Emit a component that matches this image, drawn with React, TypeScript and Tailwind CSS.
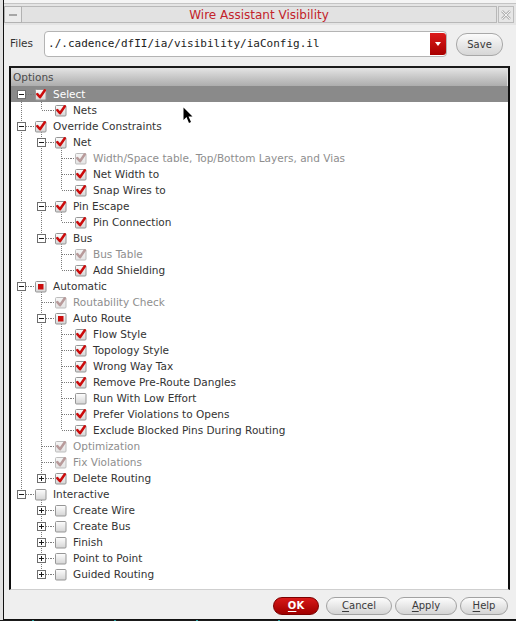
import React from "react";

type State = "checked" | "unchecked" | "partial";
type TNode = {
  label: string;
  state: State;
  disabled?: boolean;
  expanded?: boolean;
  collapsed?: boolean;
  selected?: boolean;
  children?: TNode[];
};

const c = (label: string, extra: Partial<TNode> = {}): TNode => ({ label, state: "checked", ...extra });
const d = (label: string): TNode => ({ label, state: "checked", disabled: true });
const u = (label: string, extra: Partial<TNode> = {}): TNode => ({ label, state: "unchecked", ...extra });

const tree: TNode[] = [
  c("Select", { expanded: true, selected: true, children: [c("Nets")] }),
  c("Override Constraints", {
    expanded: true,
    children: [
      c("Net", {
        expanded: true,
        children: [d("Width/Space table, Top/Bottom Layers, and Vias"), c("Net Width to"), c("Snap Wires to")],
      }),
      c("Pin Escape", { expanded: true, children: [c("Pin Connection")] }),
      c("Bus", { expanded: true, children: [d("Bus Table"), c("Add Shielding")] }),
    ],
  }),
  {
    label: "Automatic",
    state: "partial",
    expanded: true,
    children: [
      d("Routability Check"),
      {
        label: "Auto Route",
        state: "partial",
        expanded: true,
        children: [
          c("Flow Style"),
          c("Topology Style"),
          c("Wrong Way Tax"),
          c("Remove Pre-Route Dangles"),
          u("Run With Low Effort"),
          c("Prefer Violations to Opens"),
          c("Exclude Blocked Pins During Routing"),
        ],
      },
      d("Optimization"),
      d("Fix Violations"),
      c("Delete Routing", { collapsed: true }),
    ],
  },
  u("Interactive", {
    expanded: true,
    children: [
      u("Create Wire", { collapsed: true }),
      u("Create Bus", { collapsed: true }),
      u("Finish", { collapsed: true }),
      u("Point to Point", { collapsed: true }),
      u("Guided Routing", { collapsed: true }),
    ],
  }),
];

type Row = { n: TNode; depth: number; guides: boolean[]; hasNext: boolean; firstRoot: boolean };

const rows: Row[] = [];
const walk = (nodes: TNode[], depth: number, guides: boolean[]) => {
  nodes.forEach((n, i) => {
    const hasNext = i < nodes.length - 1;
    rows.push({ n, depth, guides: [...guides], hasNext, firstRoot: depth === 0 && i === 0 });
    if (n.expanded && n.children) walk(n.children, depth + 1, [...guides, hasNext]);
  });
};
walk(tree, 0, []);

const LINE = "#7c7c7c";

function GuideCell({ on }: { on: boolean }) {
  return (
    <svg width="20" height="16" className="shrink-0 block" shapeRendering="crispEdges">
      {on && <line x1="10.5" y1="0" x2="10.5" y2="16" stroke={LINE} strokeDasharray="1 1" />}
    </svg>
  );
}

function ConnectorCell({ row }: { row: Row }) {
  const n = row.n;
  const expandable = !!(n.expanded || n.collapsed);
  return (
    <svg width="20" height="16" className="shrink-0 block" shapeRendering="crispEdges">
      {!row.firstRoot && <line x1="10.5" y1="0" x2="10.5" y2="8" stroke={LINE} strokeDasharray="1 1" />}
      {row.hasNext && <line x1="10.5" y1="8" x2="10.5" y2="16" stroke={LINE} strokeDasharray="1 1" />}
      <line x1={expandable ? 15 : 11} y1="8.5" x2="20" y2="8.5" stroke={LINE} strokeDasharray="1 1" />
      {expandable && (
        <g>
          <rect x="6.5" y="4.5" width="8" height="8" fill="#ffffff" stroke="#6e6e6e" />
          <line x1="8" y1="8.5" x2="13" y2="8.5" stroke="#1a1a1a" />
          {n.collapsed && <line x1="10.5" y1="6" x2="10.5" y2="11" stroke="#1a1a1a" />}
        </g>
      )}
    </svg>
  );
}

function CheckCell({ row }: { row: Row }) {
  const n = row.n;
  const gid = `g${n.label.replace(/[^a-zA-Z]/g, "")}`;
  const checkColor = n.disabled ? "#b89a9a" : "#cc0c0c";
  return (
    <svg width="20" height="16" className="shrink-0 block overflow-visible">
      <defs>
        <linearGradient id={gid} x1="0" y1="0" x2="0" y2="1">
          <stop offset="0" stopColor={n.disabled ? "#f6f6f6" : "#fefefe"} />
          <stop offset="1" stopColor={n.disabled ? "#e4e4e4" : "#d4d4d4"} />
        </linearGradient>
      </defs>
      <line x1="0" y1="8.5" x2="4" y2="8.5" stroke={LINE} strokeDasharray="1 1" shapeRendering="crispEdges" />
      {n.expanded && n.children && (
        <line x1="10.5" y1="14" x2="10.5" y2="16" stroke={LINE} strokeDasharray="1 1" shapeRendering="crispEdges" />
      )}
      <rect
        x="4.5"
        y="3.5"
        width="10.5"
        height="10.5"
        rx="1"
        fill={`url(#${gid})`}
        stroke={n.disabled ? "#bdbdbd" : "#969696"}
      />
      {n.state === "checked" && (
        <path
          d="M6.3 8.2 L9 11.2 L13.8 4.2"
          fill="none"
          stroke={checkColor}
          strokeWidth="2.5"
          strokeLinecap="round"
          strokeLinejoin="round"
        />
      )}
      {n.state === "partial" && <rect x="7" y="6" width="5.5" height="5.5" fill="#cc0c0c" />}
    </svg>
  );
}

function TreeRow({ row }: { row: Row }) {
  const n = row.n;
  const textColor = n.selected ? "text-white" : n.disabled ? "text-[#8e8e8e]" : "text-[#333333]";
  return (
    <div className={`flex h-[16px] items-center ${n.selected ? "bg-[#8a8a8a]" : ""}`}>
      {row.guides.map((g, i) => (
        <GuideCell key={i} on={g} />
      ))}
      <ConnectorCell row={row} />
      <CheckCell row={row} />
      <span className={`ml-[2px] whitespace-nowrap pt-[1px] text-[10.5px] leading-[15px] ${textColor}`}>{n.label}</span>
    </div>
  );
}

function PillButton({
  w,
  children,
  primary,
}: {
  w: string;
  children: React.ReactNode;
  primary?: boolean;
}) {
  return (
    <div
      className={`${w} flex h-[18px] items-center justify-center rounded-full border text-[10px] leading-none ${
        primary
          ? "border-[#7a0000] bg-linear-to-b from-[#d81818] to-[#a00000] font-bold text-white"
          : "border-[#a2a2a2] bg-linear-to-b from-[#fcfcfc] to-[#d4d4d4] text-[#3a3a3a]"
      }`}
    >
      {children}
    </div>
  );
}

export default function App() {
  return (
    <div className="relative flex h-[621px] w-[516px] flex-col overflow-hidden bg-[#1b1b1b] font-['DejaVu_Sans',sans-serif]">
      <div className="flex h-[620px]">
        <div className="w-[3px] shrink-0 bg-[#e2e2e2]" />
        <div className="flex flex-1 flex-col border-b border-l border-[#111111] bg-[#efefef]">
          {/* top frame */}
          <div className="h-[4px] border-b border-[#c4c4c4] bg-[#f4f4f4]" />
          {/* title bar */}
          <div className="flex h-[21px] items-center bg-[#e4e4e4]">
            <div className="flex h-[17px] w-[18px] items-center justify-center border border-[#b2b2b2] bg-[#ebebeb]">
              <div className="h-[2px] w-[8px] bg-[#a6a6a6]" />
            </div>
            <div className="flex h-[17px] flex-1 items-center justify-center border-y border-r border-[#b8b8b8] bg-[#e2e2e2]">
              <span className="text-[12px] leading-none text-[#c3232b]">Wire Assistant Visibility</span>
            </div>
            <div className="ml-[1px] mr-[2px] flex h-[17px] w-[16px] items-center justify-center border border-[#bcbcbc] bg-[#e6e6e6]">
              <svg width="10" height="10" viewBox="0 0 10 10">
                <path d="M1 1 L9 9 M9 1 L1 9" stroke="#b4b4b4" strokeWidth="2.6" />
                <path d="M1 1 L9 9 M9 1 L1 9" stroke="#f2f2f2" strokeWidth="1" />
              </svg>
            </div>
          </div>
          {/* files row */}
          <div className="mt-[6px] flex h-[26px] items-center">
            <span className="ml-[6px] text-[10.5px] text-[#333333]">Files</span>
            <div className="ml-[11px] flex h-[26px] w-[403px] items-stretch rounded-[4px] border border-[#b4b4b4] bg-white">
              <div className="flex flex-1 items-center pl-[3px] font-['DejaVu_Sans_Mono',monospace] text-[11px] text-[#222222]">
                ./.cadence/dfII/ia/visibility/iaConfig.il
              </div>
              <div className="my-[1px] flex w-[16px] items-center justify-center rounded-r-[3px] bg-linear-to-b from-[#dc1a1a] to-[#a80000]">
                <svg width="6" height="4" viewBox="0 0 6 4">
                  <path d="M0 0 L6 0 L3 4 Z" fill="#ffffff" />
                </svg>
              </div>
            </div>
            <div className="ml-[9px] flex h-[23px] w-[47px] items-center justify-center rounded-[11px] border border-[#a8a8a8] bg-linear-to-b from-[#fbfbfb] to-[#d6d6d6] text-[10px] text-[#3a3a3a]">
              Save
            </div>
          </div>
          {/* options panel */}
          <div className="ml-[5px] mt-[9px] flex h-[524px] w-[501px] flex-col border-x-2 border-t-2 border-b border-x-[#0e0e0e] border-t-[#1a1a1a] border-b-[#cfcfcf] bg-white">
            <div className="flex h-[18px] items-center border-r border-[#e0e0e0] bg-linear-to-b from-[#e4e4e4] to-[#adadad] pl-[2px] pt-[1px] text-[10.5px] text-[#4a4a4a]">
              Options
            </div>
            <div className="flex flex-col">
              {rows.map((r, i) => (
                <TreeRow key={i} row={r} />
              ))}
            </div>
          </div>
          {/* buttons */}
          <div className="mt-[7px] flex justify-end gap-[3px] pr-[8px]">
            <PillButton w="w-[46px]" primary>
              <span className="underline underline-offset-2">O</span>K
            </PillButton>
            <div className="w-[1px]" />
            <PillButton w="w-[66px]">
              <span className="underline underline-offset-2">C</span>ancel
            </PillButton>
            <PillButton w="w-[62px]">
              <span className="underline underline-offset-2">A</span>pply
            </PillButton>
            <PillButton w="w-[48px]">
              <span className="underline underline-offset-2">H</span>elp
            </PillButton>
          </div>
        </div>
      </div>
      <div className="flex h-[1px] gap-[80px] pl-[32px]">
        <div className="h-[1px] w-[2px] bg-[#2aa0a0]" />
        <div className="h-[1px] w-[2px] bg-[#2aa0a0]" />
        <div className="h-[1px] w-[2px] bg-[#2aa0a0]" />
        <div className="h-[1px] w-[2px] bg-[#2aa0a0]" />
      </div>
      {/* mouse cursor */}
      <svg className="absolute left-[183px] top-[107px]" width="11" height="18" viewBox="0 0 11 18">
        <path d="M0.5 0.5 L0.5 13 L3.5 10 L6 16 L8 15 L5.5 9.5 L9.5 9.5 Z" fill="#000000" />
      </svg>
    </div>
  );
}
